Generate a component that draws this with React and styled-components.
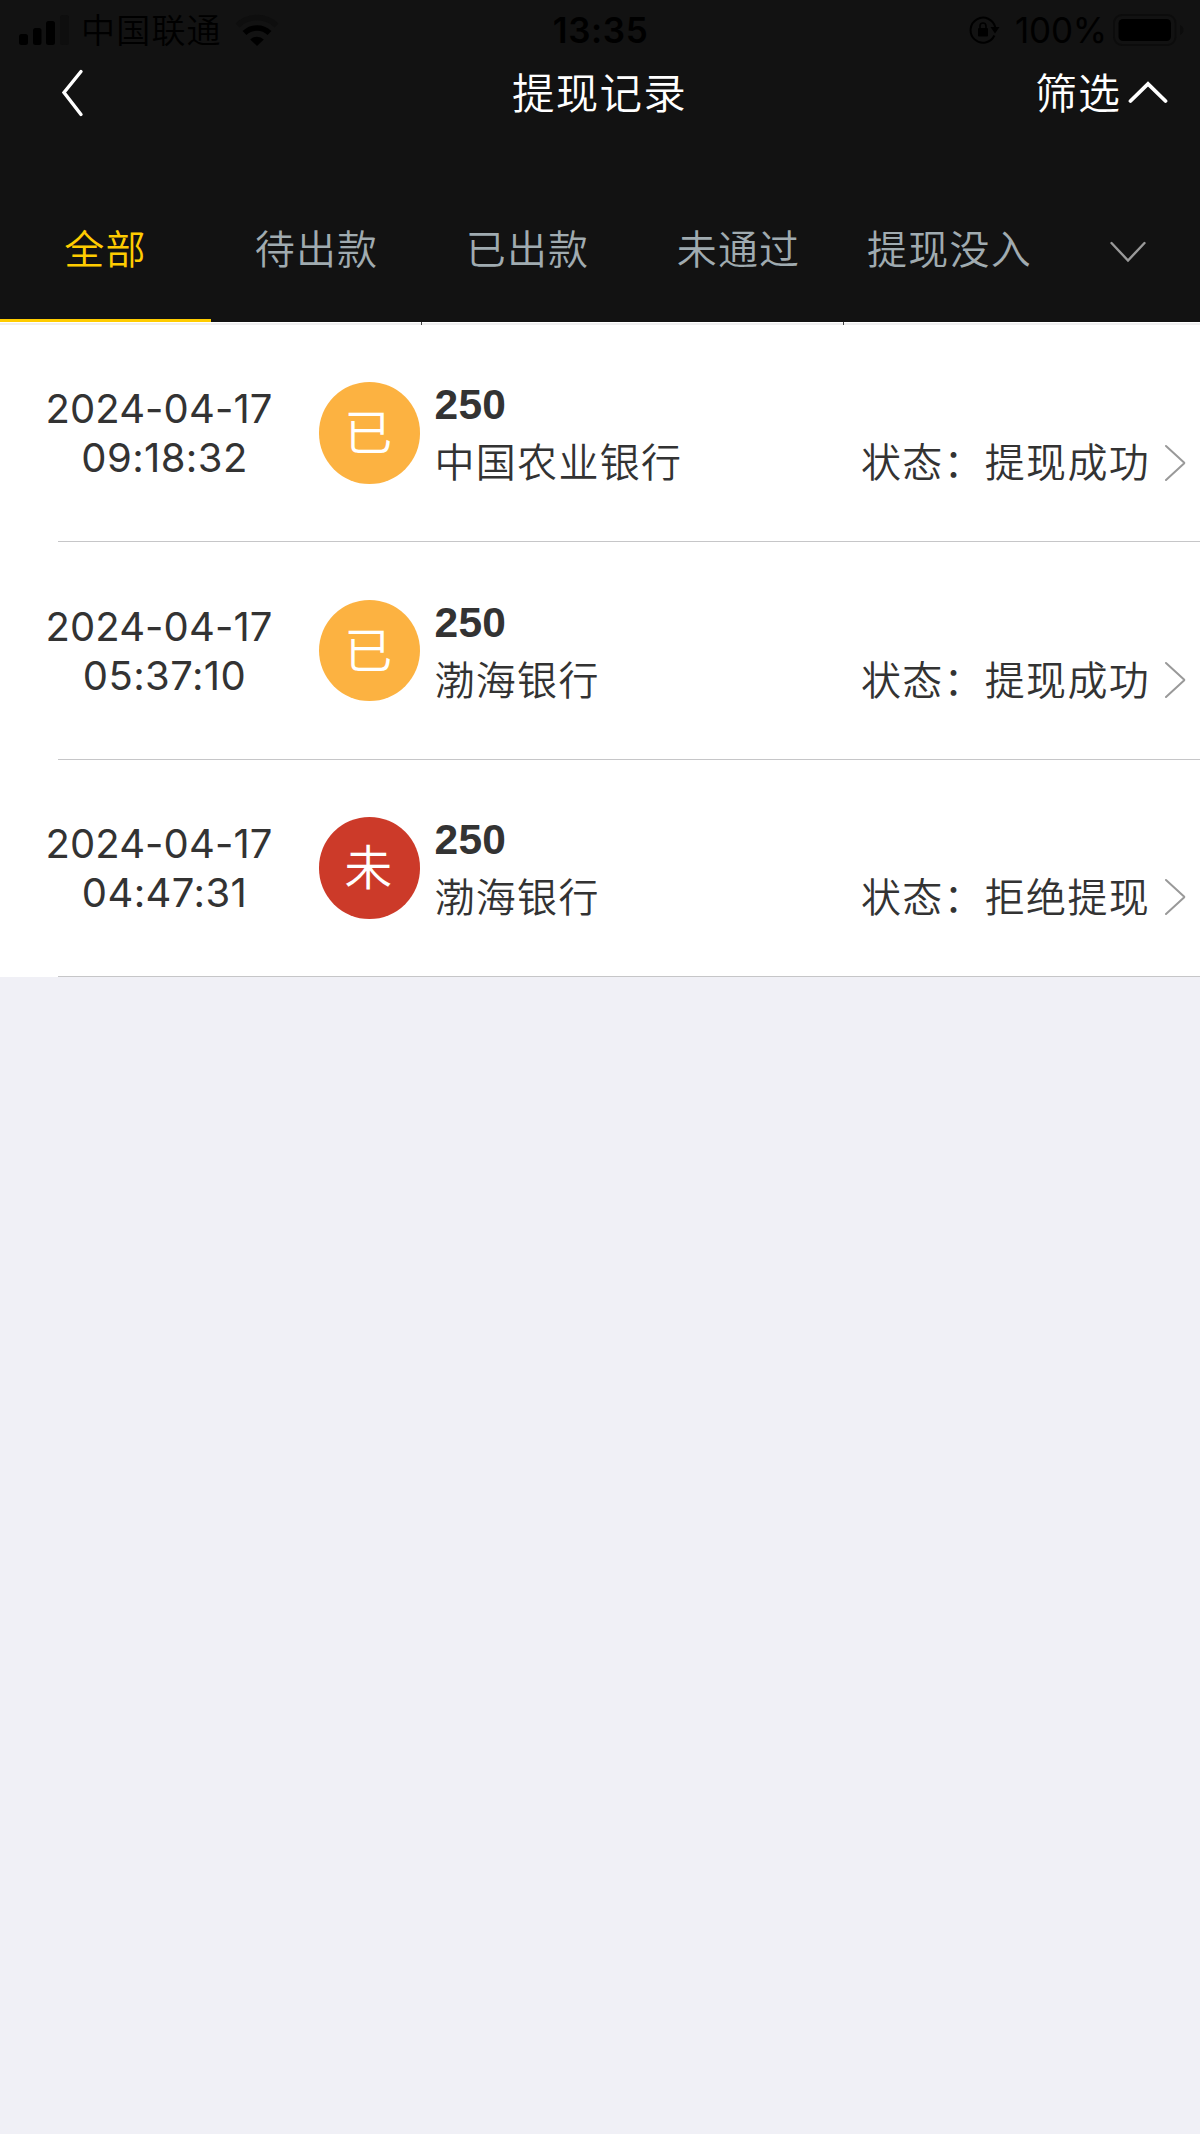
import React from 'react';
import styled, { createGlobalStyle } from 'styled-components'

const tabs = ['全部', '待出款', '已出款', '未通过', '提现没入'];

const records = [
  { id: 1, date: '2024-04-17', time: '09:18:32', amount: '250', bank: '中国农业银行', status: '提现成功', mark: '已', color: '#fcb241' },
  { id: 2, date: '2024-04-17', time: '05:37:10', amount: '250', bank: '渤海银行', status: '提现成功', mark: '已', color: '#fcb241' },
  { id: 3, date: '2024-04-17', time: '04:47:31', amount: '250', bank: '渤海银行', status: '拒绝提现', mark: '未', color: '#cc3a29' },
];

const StatusIcons = () => {
  return (
    <StatusBar>
      <StatusLeft>
        <svg width="50" height="30" viewBox="0 0 50 30">
          <rect x="0" y="19" width="9" height="11" rx="2.5" />
          <rect x="14" y="13" width="8.5" height="17" rx="2.5" />
          <rect x="27" y="6" width="9" height="24" rx="2.5" />
          <rect x="41" y="0" width="9" height="30" rx="2.5" fill="#0e0e0e" />
        </svg>
        <Carrier>中国联通</Carrier>
        <svg width="44" height="32" viewBox="0 0 44 32">
          <path d="M2.5 11.5 A28 28 0 0 1 41.5 11.5" fill="none" stroke="#0e0e0e" strokeWidth="5.5" />
          <path d="M9.5 19 A18 18 0 0 1 34.5 19" fill="none" stroke="#000" strokeWidth="5.5" />
          <path d="M22 32 L15.2 25.4 A10 10 0 0 1 28.8 25.4 Z" />
        </svg>
      </StatusLeft>
      <Clock>13:35</Clock>
      <StatusRight>
        <svg width="31" height="28" viewBox="0 0 31 28">
          <path d="M25.4 19.5 A12.5 12.5 0 1 1 26.3 11.5" fill="none" stroke="#000" strokeWidth="2" />
          <path d="M21.5 11 H30.5 L26 17.5 Z" />
          <rect x="9" y="12" width="10" height="8.5" rx="1" />
          <path d="M11 12.5 V10 A3 3 0 0 1 17 10 V12.5" fill="none" stroke="#000" strokeWidth="1.6" />
        </svg>
        <Percent>100%</Percent>
        <svg width="71" height="32" viewBox="0 0 71 32">
          <rect x="1" y="1" width="61.5" height="30" rx="8" fill="none" stroke="#0c0c0c" strokeWidth="2" />
          <rect x="5.5" y="5" width="52.5" height="22" rx="4.5" />
          <path d="M67 11 Q70.5 13 70.5 16 Q70.5 19 67 21 Z" fill="#0c0c0c" />
        </svg>
      </StatusRight>
    </StatusBar>
  );
}

const Record = ({ item }) => {
  return (
    <Row>
      <RowBody>
        <DateBox>
          <Day>{item.date}</Day>
          <Time>{item.time}</Time>
        </DateBox>
        <Mark $color={item.color}>{item.mark}</Mark>
        <Info>
          <Amount>{item.amount}</Amount>
          <Detail>
            <span>{item.bank}</span>
            <Status>
              <span>状态：{item.status}</span>
              <svg width="22" height="40" viewBox="0 0 22 40">
                <path d="M2 5 L20 21.5 Q20.5 22 20 22.5 L2 39" fill="none" stroke="#999" strokeWidth="2" strokeLinecap="round" />
              </svg>
            </Status>
          </Detail>
        </Info>
      </RowBody>
      <Divider />
    </Row>
  );
}

const App = () => {
  return (
    <Page>
      <GlobalStyle />
      <Header>
        <StatusIcons />
        <NavBar>
          <Back>
            <svg width="24" height="50" viewBox="0 0 24 50">
              <path d="M21 3.5 L4 24.5 L21 46.5" fill="none" stroke="#fff" strokeWidth="3.4" strokeLinecap="round" />
            </svg>
          </Back>
          <Title>提现记录</Title>
          <Filter>
            <span>筛选</span>
            <svg width="40" height="24" viewBox="0 0 40 24">
              <path d="M2.5 20 L20 3 L37.5 20" fill="none" stroke="#fff" strokeWidth="3.8" strokeLinecap="round" />
            </svg>
          </Filter>
        </NavBar>
        <TabBar>
          {tabs.map((tab, i) => (
            <Tab key={tab} $active={i === 0}>{tab}</Tab>
          ))}
          <More>
            <svg width="36" height="22" viewBox="0 0 36 22">
              <path d="M1.5 2 L18 19.5 L34.5 2" fill="none" stroke="#999" strokeWidth="2.4" strokeLinecap="round" />
            </svg>
          </More>
        </TabBar>
      </Header>
      <Ticks>
        <Tick />
        <Tick />
      </Ticks>
      <List>
        {records.map(item => <Record key={item.id} item={item} />)}
      </List>
    </Page>
  );
}

export default App;


const GlobalStyle = createGlobalStyle`
  body {
    margin: 0;
    background: #f0f0f6;
  }

  * {
    box-sizing: border-box;
  }

  svg {
    display: block;
    flex-shrink: 0;
  }
`;

const Page = styled.div`
  width: 1200px;
  min-height: 2134px;
  background: #f0f0f6;
  color: #333;
  font-family: "Noto Sans CJK SC", sans-serif;
  font-weight: 350;
`;

const Header = styled.div`
  height: 322px;
  background: #121212;
`;

const StatusBar = styled.div`
  display: grid;
  grid-template-columns: 1fr auto 1fr;
  height: 58px;
  padding: 0 16px 0 19px;
  color: #000;
`;

const StatusLeft = styled.div`
  display: flex;
  align-items: center;
`;

const StatusRight = styled.div`
  display: flex;
  align-items: center;
  justify-content: flex-end;
`;

const Carrier = styled.span`
  margin: 0 13px 0 12px;
  padding-bottom: 2px;
  font-size: 34px;
  letter-spacing: 1.2px;
  line-height: 54px;
`;

const Clock = styled.span`
  margin-right: 2px;
  font-family: Inter, sans-serif;
  font-size: 35px;
  font-weight: 600;
  letter-spacing: 0.6px;
  line-height: 60px;
`;

const Percent = styled.span`
  margin: 0 6px 0 15px;
  font-family: Inter, sans-serif;
  font-size: 35px;
  font-weight: 400;
  letter-spacing: -0.2px;
  line-height: 60px;
`;

const NavBar = styled.div`
  display: grid;
  grid-template-columns: 1fr auto 1fr;
  align-items: center;
  height: 70px;
  padding: 0 32px 0 60px;
  color: #fff;
`;

const Back = styled.div`
  display: flex;
`;

const Title = styled.div`
  margin-right: 29px;
  padding-bottom: 4px;
  font-size: 42.5px;
  letter-spacing: 1.2px;
  line-height: 62px;
`;

const Filter = styled.div`
  display: flex;
  align-items: center;
  justify-content: flex-end;
  gap: 7px;
  font-size: 42px;
  letter-spacing: 1px;
  line-height: 62px;

  span {
    padding-bottom: 4px;
  }
`;

const TabBar = styled.div`
  display: flex;
  height: 144px;
  margin-top: 50px;
`;

const Tab = styled.div`
  width: 211px;
  height: 144px;
  border-bottom: 3px solid ${props => (props.$active ? '#ffcc00' : 'transparent')};
  color: ${props => (props.$active ? '#ffcc00' : '#a0abb0')};
  font-size: 40px;
  letter-spacing: 1.2px;
  line-height: 138px;
  text-align: center;
  white-space: nowrap;
`;

const More = styled.div`
  display: flex;
  flex: 1;
  align-items: center;
  justify-content: center;
  padding-top: 4px;
`;

const Ticks = styled.div`
  display: flex;
  height: 3px;
  background: linear-gradient(#fff 1px, #efeff0 1px);
`;

const Tick = styled.div`
  width: 422px;
  height: 3px;
  border-right: 1px solid #444;
`;

const List = styled.div`
  background: #fff;
`;

const Row = styled.div`
  height: 217.4px;
`;

const RowBody = styled.div`
  display: flex;
  align-items: center;
  height: 216.4px;
`;

const Divider = styled.div`
  height: 1px;
  margin-left: 58px;
  background: #c6c6c8;
`;

const DateBox = styled.div`
  width: 242px;
  margin-left: 42px;
  font-family: Inter, sans-serif;
  font-size: 40px;
  font-weight: 400;
  line-height: 49px;
  text-align: center;
`;

const Day = styled.div`
  padding-right: 8px;
  letter-spacing: 0.1px;
`;

const Time = styled.div`
  padding-left: 3px;
  letter-spacing: 0.4px;
`;

const Mark = styled.div`
  width: 101.5px;
  height: 101.5px;
  margin-left: 34.5px;
  padding-right: 2px;
  border-radius: 50%;
  background: ${props => props.$color};
  color: #fff;
  font-size: 48px;
  line-height: 95px;
  text-align: center;
`;

const Info = styled.div`
  flex: 1;
  margin-left: 14.5px;
  padding-bottom: 2px;
`;

const Amount = styled.div`
  padding-top: 1px;
  font-family: "Liberation Sans", Arial, sans-serif;
  font-size: 42.5px;
  font-weight: bold;
  letter-spacing: 0.3px;
  line-height: 56px;
`;

const Detail = styled.div`
  display: flex;
  justify-content: space-between;
  padding-right: 14px;
  font-size: 40px;
  letter-spacing: 1.3px;
  line-height: 55px;
`;

const Status = styled.div`
  display: flex;
  align-items: center;
  gap: 14px;
`;
